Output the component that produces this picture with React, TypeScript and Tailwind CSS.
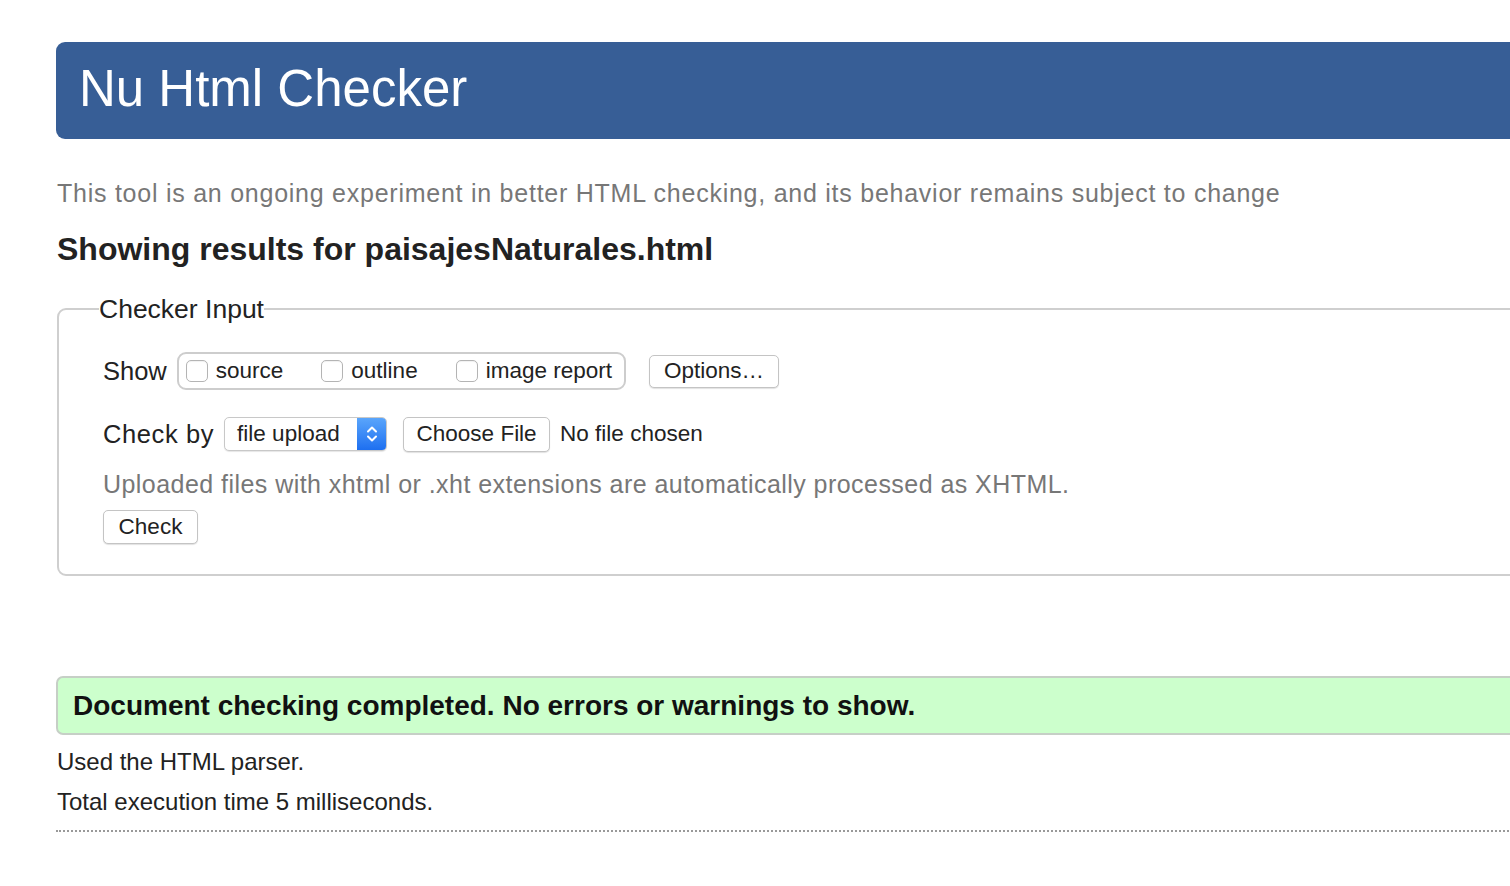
import React from "react";

const font = { fontFamily: '"Liberation Sans", Arial, Helvetica, sans-serif' };

function Box() {
  return (
    <span className="block w-[22px] h-[22px] rounded-[5px] border border-[#b4b4b4] bg-white shadow-[inset_0_1px_1px_rgba(0,0,0,0.06)]" />
  );
}

export default function App() {
  return (
    <div
      className="w-[1510px] h-[886px] overflow-hidden bg-white text-[#222]"
      style={font}
    >
      <div className="ml-[56px] w-[1600px]">
        <div className="mt-[42px] h-[97px] bg-[#375e96] rounded-l-[9px] flex items-center pl-[23px]">
          <h1 className="text-white text-[51px] leading-none font-normal mt-[-4px]">
            Nu Html Checker
          </h1>
        </div>

        <p className="mt-[38px] text-[25px] leading-[32px] text-[#777] pl-[1px] tracking-[0.75px]">
          This tool is an ongoing experiment in better HTML checking, and its behavior remains subject to change
        </p>

        <h2 className="mt-[22px] text-[32px] leading-[36px] font-bold text-[#222] pl-[1px]">
          Showing results for paisajesNaturales.html
        </h2>

        <fieldset className="mt-[28px] border-2 border-[#cfcfcf] rounded-[9px] pl-[44px] pb-[30px] mx-[1px]">
          <legend className="-ml-[4px] text-[26.5px] leading-[28px] text-[#222]">
            Checker Input
          </legend>

          <div className="mt-[29px] flex items-center h-[38px]">
            <span className="text-[25.5px] mr-[10px]">Show</span>
            <div className="h-[38px] border-2 border-[#cdcdcd] rounded-[9px] flex items-center pl-[7px] pr-[12px] text-[22.5px]">
              <Box />
              <span className="ml-[8px]">source</span>
              <span className="ml-[38px] flex items-center"><Box /></span>
              <span className="ml-[8px]">outline</span>
              <span className="ml-[38px] flex items-center"><Box /></span>
              <span className="ml-[8px]">image report</span>
            </div>
            <button className="ml-[23px] h-[33px] w-[130px] border border-[#c4c4c4] rounded-[5px] bg-white text-[22.5px] shadow-[0_1px_1px_rgba(0,0,0,0.12)] flex items-center justify-center">
              Options…
            </button>
          </div>

          <div className="mt-[26px] flex items-center h-[36px]">
            <span className="text-[25.5px] tracking-[0.6px] mr-[10px]">Check by</span>
            <div className="h-[34px] w-[163px] border border-[#c8c8c8] rounded-[5px] bg-white flex items-stretch shadow-[0_1px_1px_rgba(0,0,0,0.1)] overflow-hidden">
              <span className="flex-1 flex items-center pl-[12px] text-[22.5px]">file upload</span>
              <span className="w-[29px] bg-gradient-to-b from-[#5aa5fb] to-[#1d6ff0] flex items-center justify-center">
                <svg width="12" height="20" viewBox="0 0 12 20" fill="none" stroke="white" strokeWidth="2" strokeLinecap="round" strokeLinejoin="round">
                  <path d="M2 7.5 L6 3.5 L10 7.5" />
                  <path d="M2 12.5 L6 16.5 L10 12.5" />
                </svg>
              </span>
            </div>
            <button className="ml-[16px] h-[35px] w-[147px] border border-[#c4c4c4] rounded-[5px] bg-white text-[22.5px] shadow-[0_1px_1px_rgba(0,0,0,0.12)] flex items-center justify-center">
              Choose File
            </button>
            <span className="ml-[10px] text-[22.5px]">No file chosen</span>
          </div>

          <p className="mt-[17px] text-[25px] leading-[30px] text-[#777] tracking-[0.45px]">
            Uploaded files with xhtml or .xht extensions are automatically processed as XHTML.
          </p>

          <button className="mt-[11px] h-[34px] w-[95px] border border-[#c4c4c4] rounded-[5px] bg-white text-[22.5px] shadow-[0_1px_1px_rgba(0,0,0,0.12)] flex items-center justify-center">
            Check
          </button>
        </fieldset>

        <div className="mt-[100px] h-[59px] border-2 border-[#c6cfc6] bg-[#ccffcc] rounded-l-[7px] flex items-center pl-[15px]">
          <span className="text-[28px] font-bold text-[#111] mt-[1px]">
            Document checking completed. No errors or warnings to show.
          </span>
        </div>

        <p className="mt-[12px] text-[24px] leading-[30px] pl-[1px]">Used the HTML parser.</p>
        <p className="mt-[10px] text-[24px] leading-[30px] pl-[1px]">Total execution time 5 milliseconds.</p>
        <div className="mt-[13px] border-t-2 border-dotted border-[#999]" />
      </div>
    </div>
  );
}
